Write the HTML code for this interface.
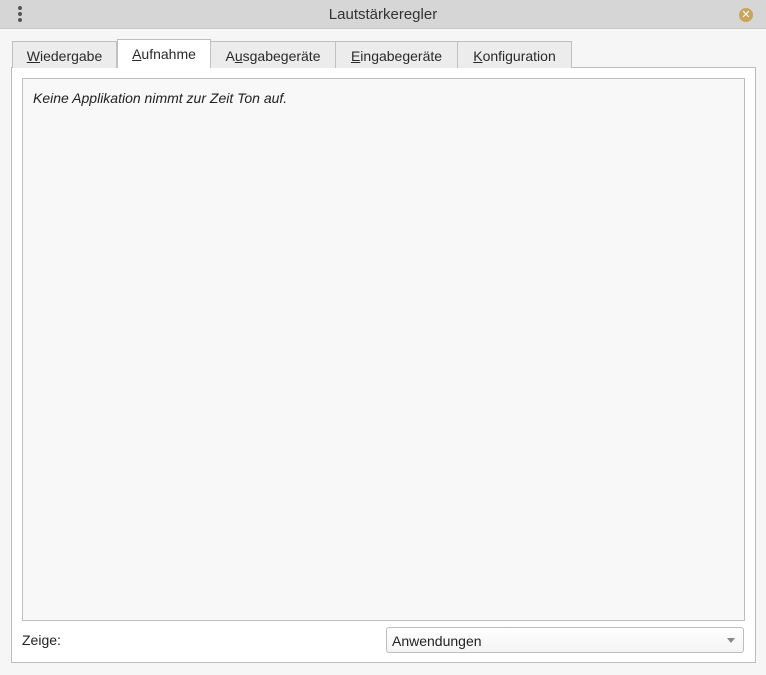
<!DOCTYPE html>
<html><head><meta charset="utf-8"><style>
*{box-sizing:border-box;margin:0;padding:0}
body{width:766px;height:675px;background:#f6f6f6;font-family:"Liberation Sans","DejaVu Sans",sans-serif;font-size:14px;color:#222;position:relative;overflow:hidden}
.tb{position:absolute;left:0;top:0;width:766px;height:29px;background:#d6d6d6;border-bottom:1px solid #c8c8c8}
.title{position:absolute;left:0;width:766px;top:6px;text-align:center;font-size:15px;color:#333}
.dot{position:absolute;left:18px;width:4px;height:4px;border-radius:2px;background:#555}
.close{position:absolute;left:739px;top:8px;width:14px;height:14px;border-radius:7px;background:#c9a45c;color:#fff;font-size:11px;font-weight:bold;text-align:center;line-height:14px}
.panel{position:absolute;left:11px;top:67px;width:745px;height:596px;background:#fff;border:1px solid #bdbdbd}
.tab{position:absolute;top:41px;height:27px;background:#ececec;border:1px solid #c0c0c0;border-bottom:none;padding-top:6px;text-align:center;font-size:14px;color:#2a2a2a}
.tab.a{top:39px;height:29px;background:#fff;padding-top:6px;z-index:2}
u{text-decoration:underline}
.list{position:absolute;left:22px;top:78px;width:723px;height:543px;background:#f8f8f8;border:1px solid #bdbdbd}
.msg{position:absolute;left:33px;top:90px;font-style:italic;color:#222}
.combo{position:absolute;left:386px;top:627px;width:358px;height:26px;border:1px solid #bdbdbd;border-radius:3px;background:linear-gradient(#fff,#f4f4f4);padding:5px 0 0 5px}
.arr{position:absolute;right:8px;top:10px;width:0;height:0;border-left:4px solid transparent;border-right:4px solid transparent;border-top:5px solid #888}
</style></head><body>
<div class="tb"><div class="dot" style="top:6px"></div><div class="dot" style="top:12px"></div><div class="dot" style="top:18px"></div>
<div class="title">Lautstärkeregler</div><div class="close">✕</div></div>
<div class="panel"></div>
<div class="tab" style="left:12px;width:105px"><u>W</u>iedergabe</div>
<div class="tab a" style="left:117px;width:94px"><u>A</u>ufnahme</div>
<div class="tab" style="left:210px;width:126px">A<u>u</u>sgabegeräte</div>
<div class="tab" style="left:335px;width:123px"><u>E</u>ingabegeräte</div>
<div class="tab" style="left:457px;width:115px"><u>K</u>onfiguration</div>
<div class="list"></div>
<div class="msg">Keine Applikation nimmt zur Zeit Ton auf.</div>
<div style="position:absolute;left:22px;top:632px">Zeige:</div>
<div class="combo">Anwendungen<div class="arr"></div></div>
</body></html>
